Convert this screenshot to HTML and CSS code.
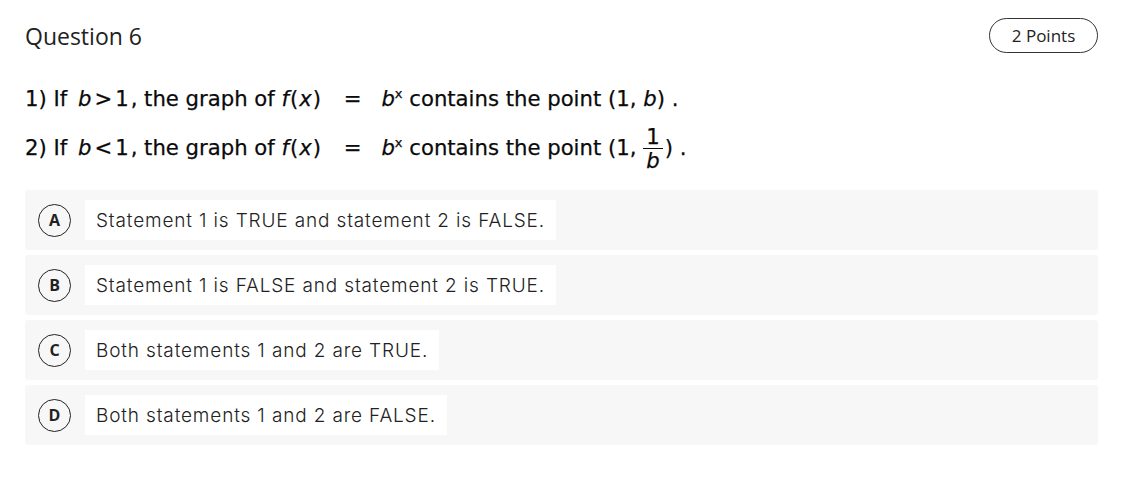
FILE: index.html
```html
<!DOCTYPE html>
<html lang="en">
<head>
<meta charset="utf-8">
<title>Question 6</title>
<link rel="stylesheet" href="styles.css">
</head>
<body>
<div class="page">
  <div class="header">
    <h2 class="title">Question 6</h2>
    <span class="points">2 Points</span>
  </div>
  <div class="stem">
    <p class="line">1) If <span class="math"><i>b</i><span class="rel">&gt;</span>1</span>, the graph of <span class="fx"><i>f</i>(<i>x</i>)</span> <span class="eq">=</span> <i>b</i><sup>x</sup> contains the point (1, <i>b</i>) .</p>
    <p class="line line2">2) If <span class="math"><i>b</i><span class="rel">&lt;</span>1</span>, the graph of <span class="fx"><i>f</i>(<i>x</i>)</span> <span class="eq">=</span> <i>b</i><sup>x</sup> contains the point (1, <span class="frac"><span class="num">1</span><span class="den"><i>b</i></span></span>) .</p>
  </div>
  <div class="options">
    <div class="option"><span class="mark">A</span><span class="label">Statement 1 is TRUE and statement 2 is FALSE.</span></div>
    <div class="option"><span class="mark">B</span><span class="label">Statement 1 is FALSE and statement 2 is TRUE.</span></div>
    <div class="option"><span class="mark">C</span><span class="label">Both statements 1 and 2 are TRUE.</span></div>
    <div class="option"><span class="mark">D</span><span class="label">Both statements 1 and 2 are FALSE.</span></div>
  </div>
</div>
</body>
</html>
```
FILE: styles.css
```css
html, body {
  margin: 0;
  padding: 0;
  background: #ffffff;
}
.page {
  padding: 18px 25px 0 25px;
  color: #222222;
}
.header {
  display: flex;
  justify-content: space-between;
  align-items: center;
  height: 35px;
}
.title {
  margin: 0;
  font-family: "Open Sans", sans-serif;
  font-weight: 400;
  font-size: 23px;
  color: #222222;
}
.points {
  display: inline-flex;
  align-items: center;
  justify-content: center;
  box-sizing: border-box;
  width: 109px;
  height: 35px;
  border: 1px solid #333333;
  border-radius: 18px;
  font-family: "Open Sans", sans-serif;
  font-size: 17px;
  color: #222222;
}
.stem {
  margin-top: 32px;
  font-family: "DejaVu Sans", sans-serif;
  font-size: 21.2px;
  color: #0a0a0a;
  -webkit-text-stroke: 0.25px #0a0a0a;
}
.line {
  margin: 0;
  line-height: 28px;
  white-space: nowrap;
}
.line2 {
  margin-top: 21px;
}
.math {
  margin-left: 4px;
  margin-right: 2px;
}
.rel {
  margin: 0 3px;
}
.fx {
  letter-spacing: 1px;
}
.eq {
  margin: 0 13px 0 15px;
}
.line sup {
  font-size: 13px;
  vertical-align: 8px;
  line-height: 0;
}
.frac {
  display: inline-flex;
  flex-direction: column;
  align-items: center;
  vertical-align: middle;
  line-height: 23px;
  margin: -20px 2px -20px 0;
  position: relative;
  top: -1px;
}
.num {
  border-bottom: 1.5px solid #0a0a0a;
  padding: 0 3px 0;
}
.den {
  padding-top: 0;
}
.options {
  margin-top: 28px;
  display: flex;
  flex-direction: column;
  gap: 5px;
}
.option {
  display: flex;
  align-items: center;
  height: 60px;
  background: #f7f7f7;
  border-radius: 3px;
  padding-left: 13px;
}
.mark {
  box-sizing: border-box;
  width: 33px;
  height: 33px;
  border: 1.5px solid #222222;
  border-radius: 50%;
  display: inline-flex;
  align-items: center;
  justify-content: center;
  font-family: "Open Sans", sans-serif;
  font-weight: 700;
  font-size: 16px;
  color: #222222;
  flex: none;
}
.label {
  margin-left: 14px;
  height: 40px;
  display: inline-flex;
  align-items: center;
  padding: 0 11px 0 11px;
  background: #ffffff;
  font-family: "Inter", sans-serif;
  font-weight: 300;
  font-size: 19px;
  letter-spacing: 0.85px;
  color: #222222;
}
```
